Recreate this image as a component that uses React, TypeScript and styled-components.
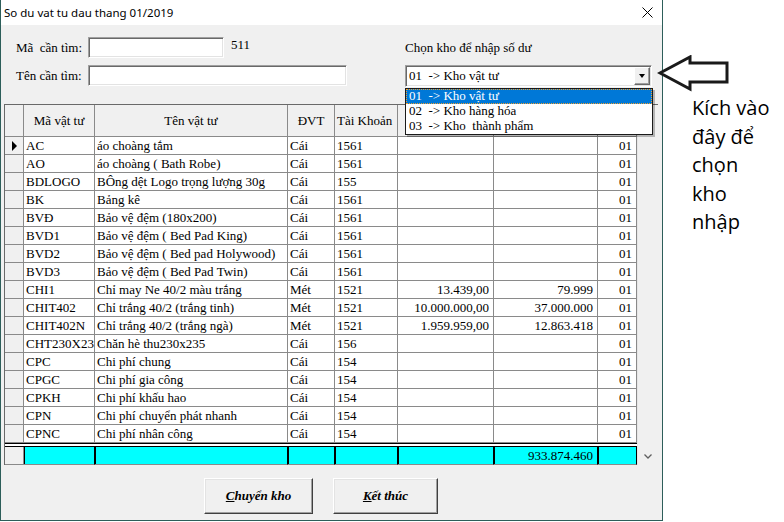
import React from 'react';
import styled, { createGlobalStyle } from 'styled-components';

const GlobalStyle = createGlobalStyle`
  html, body {
    margin: 0;
    padding: 0;
    background: #ffffff;
  }
  body {
    width: 784px;
    height: 522px;
    overflow: hidden;
  }
`;

const SERIF = `"Liberation Serif", "Times New Roman", serif`;
const COLS = '19px 71px 193px 47px 63px 96px 104px 39px';

const Screen = styled.div`
  display: flex;
  width: 784px;
  height: 522px;
  background: #ffffff;
`;

const Window = styled.div`
  flex-shrink: 0;
  width: 663px;
  height: 521px;
  box-sizing: border-box;
  border: 1px solid #2d5e5a;
  border-top: none;
  display: flex;
  flex-direction: column;
`;

const TitleBar = styled.div`
  height: 25px;
  flex-shrink: 0;
  display: flex;
  align-items: center;
  justify-content: space-between;
  padding: 0 9px 0 3px;
  background: #ffffff;
  font-family: "Noto Sans", "Liberation Sans", sans-serif;
  font-size: 11.5px;
  color: #000;
`;

const CloseGlyph = styled.svg`
  width: 11px;
  height: 11px;
`;

const Body = styled.div`
  flex: 1;
  background: #f0f0f0;
  display: flex;
  flex-direction: column;
  font-family: ${SERIF};
  font-size: 13px;
  color: #000;
`;

const FormArea = styled.div`
  height: 79px;
  box-sizing: border-box;
  padding-top: 12px;
  display: flex;
`;

const SearchForm = styled.div`
  width: 404px;
  box-sizing: border-box;
  padding-left: 15px;
  display: grid;
  grid-template-columns: 72px auto;
  grid-auto-rows: 21px;
  row-gap: 7px;
  align-items: center;
  align-content: start;
`;

const Label = styled.span`
  white-space: pre;
  line-height: 16px;
`;

const FieldGroup = styled.div`
  display: flex;
  align-items: flex-start;
  height: 21px;
`;

const TextBox = styled.div<{ $w: number }>`
  width: ${p => p.$w}px;
  height: 21px;
  box-sizing: border-box;
  background: #ffffff;
  border: 1px solid;
  border-color: #a0a0a0 #ffffff #ffffff #a0a0a0;
  box-shadow: inset 1px 1px 0 #696969, inset -1px -1px 0 #e3e3e3;
`;

const Value = styled.span`
  margin-left: 7px;
  line-height: 16px;
`;

const StoreSection = styled.div`
  width: 247px;
  display: flex;
  flex-direction: column;
`;

const StoreLabel = styled.span`
  margin-top: 3px;
  line-height: 16px;
`;

const Combo = styled.div`
  position: relative;
  margin-top: 9px;
  height: 22px;
  box-sizing: border-box;
  background: #ffffff;
  border: 1px solid;
  border-color: #a0a0a0 #ffffff #ffffff #a0a0a0;
  box-shadow: inset 1px 1px 0 #696969, inset -1px -1px 0 #e3e3e3;
  display: flex;
  align-items: center;
  justify-content: space-between;
  padding-left: 3px;
`;

const ComboText = styled.span`
  white-space: pre;
  line-height: 16px;
`;

const DropButton = styled.div`
  width: 16px;
  height: 18px;
  margin-right: 1px;
  box-sizing: border-box;
  background: #f0f0f0;
  border: 1px solid;
  border-color: #ffffff #696969 #696969 #ffffff;
  box-shadow: inset -1px -1px 0 #a0a0a0;
  display: flex;
  align-items: center;
  justify-content: center;
`;

const DownTriangle = styled.span`
  width: 0;
  height: 0;
  border-left: 3.5px solid transparent;
  border-right: 3.5px solid transparent;
  border-top: 4px solid #000;
`;

const OptionList = styled.div`
  position: absolute;
  top: 22px;
  left: -1px;
  width: 248px;
  box-sizing: border-box;
  background: #ffffff;
  border: 1px solid #1a1a1a;
  box-shadow: 2px 2px 0 rgba(0, 0, 0, 0.25);
  z-index: 5;
`;

const Option = styled.div<{ $selected?: boolean }>`
  height: 15px;
  box-sizing: border-box;
  padding-left: 3px;
  line-height: 14px;
  white-space: pre;
  background: ${p => (p.$selected ? '#0078d7' : 'transparent')};
  color: ${p => (p.$selected ? '#ffffff' : '#000')};
  outline: ${p => (p.$selected ? '1px dotted #f0a030' : 'none')};
  outline-offset: -1px;
`;

const GridFrame = styled.div`
  margin-left: 3px;
  width: 654px;
  height: 361px;
  box-sizing: border-box;
  border-top: 1px solid #696969;
  border-left: 1px solid #696969;
  display: flex;
  background: #ffffff;
`;

const GridBody = styled.div`
  width: 632px;
  display: flex;
  flex-direction: column;
`;

const Row = styled.div<{ $h: number }>`
  display: grid;
  grid-template-columns: ${COLS};
  height: ${p => p.$h}px;
`;

const TotalRow = styled(Row)`
  box-sizing: border-box;
  border-top: 4px double #000;
`;

type CellKind = 'head' | 'ind' | 'data' | 'total';

const Cell = styled.div<{ $kind?: CellKind; $align?: 'left' | 'right' | 'center' }>`
  box-sizing: border-box;
  border-right: 1px solid ${p => (p.$kind === 'total' ? '#000' : '#8a8a8a')};
  border-bottom: 1px solid #8a8a8a;
  background: ${p =>
    p.$kind === 'head' || p.$kind === 'ind'
      ? '#f0f0f0'
      : p.$kind === 'total'
        ? '#00ffff'
        : '#ffffff'};
  box-shadow: ${p => (p.$kind === 'total' ? 'inset 1px 0 0 #000' : 'none')};
  display: flex;
  align-items: center;
  justify-content: ${p =>
    p.$align === 'right' ? 'flex-end' : p.$align === 'center' ? 'center' : 'flex-start'};
  padding: ${p => (p.$align === 'right' ? '0 4px 0 0' : p.$align === 'center' ? '0' : '0 0 0 2px')};
  white-space: pre;
  overflow: hidden;
  line-height: 16px;
`;

const RowPointer = styled.span`
  width: 0;
  height: 0;
  margin-left: 1px;
  border-top: 5px solid transparent;
  border-bottom: 5px solid transparent;
  border-left: 5px solid #000;
`;

const ScrollTrack = styled.div`
  width: 21px;
  background: #f0f0f0;
  border-left: 1px solid #e6e6e6;
  box-sizing: border-box;
  display: flex;
  flex-direction: column;
  justify-content: flex-end;
  align-items: center;
  padding-bottom: 6px;
`;

const Chevron = styled.svg`
  width: 8px;
  height: 5px;
`;

const ButtonRow = styled.div`
  display: flex;
  gap: 20px;
  padding-left: 203px;
  margin-top: 13px;
`;

const Button = styled.button<{ $w: number }>`
  width: ${p => p.$w}px;
  height: 36px;
  box-sizing: border-box;
  background: #f0f0f0;
  border: 1px solid;
  border-color: #ffffff #404040 #404040 #ffffff;
  box-shadow: inset -1px -1px 0 #a0a0a0, inset 1px 1px 0 #e3e3e3;
  font-family: ${SERIF};
  font-size: 13px;
  font-weight: bold;
  font-style: italic;
  color: #000;
  padding: 0;
  cursor: pointer;
`;

const Mnemonic = styled.span`
  text-decoration: underline;
`;

const Annotation = styled.div`
  flex: 1;
  padding-top: 55px;
  display: flex;
  flex-direction: column;
`;

const ArrowSvg = styled.svg`
  width: 76px;
  height: 38px;
  margin-left: -6px;
`;

const Note = styled.div`
  margin: 1px 0 0 29px;
  font-family: "Open Sans", "Noto Sans", sans-serif;
  font-size: 20px;
  line-height: 28.5px;
  color: #000;
`;

type Item = {
  code: string;
  name: string;
  unit: string;
  account: string;
  qty?: string;
  amount?: string;
};

const items: Item[] = [
  { code: 'AC', name: 'áo choàng tắm', unit: 'Cái', account: '1561' },
  { code: 'AO', name: 'áo choàng ( Bath Robe)', unit: 'Cái', account: '1561' },
  { code: 'BDLOGO', name: 'BÔng dệt Logo trọng lượng 30g', unit: 'Cái', account: '155' },
  { code: 'BK', name: 'Bảng kê', unit: 'Cái', account: '1561' },
  { code: 'BVĐ', name: 'Bảo vệ đệm (180x200)', unit: 'Cái', account: '1561' },
  { code: 'BVD1', name: 'Bảo vệ đệm ( Bed Pad King)', unit: 'Cái', account: '1561' },
  { code: 'BVD2', name: 'Bảo vệ đệm ( Bed pad Holywood)', unit: 'Cái', account: '1561' },
  { code: 'BVD3', name: 'Bảo vệ đệm ( Bed Pad Twin)', unit: 'Cái', account: '1561' },
  { code: 'CHI1', name: 'Chỉ may Ne 40/2 màu trắng', unit: 'Mét', account: '1521', qty: '13.439,00', amount: '79.999' },
  { code: 'CHIT402', name: 'Chỉ trắng 40/2 (trắng tinh)', unit: 'Mét', account: '1521', qty: '10.000.000,00', amount: '37.000.000' },
  { code: 'CHIT402N', name: 'Chỉ trắng 40/2 (trắng ngà)', unit: 'Mét', account: '1521', qty: '1.959.959,00', amount: '12.863.418' },
  { code: 'CHT230X235', name: 'Chăn hè thu230x235', unit: 'Cái', account: '156' },
  { code: 'CPC', name: 'Chi phí chung', unit: 'Cái', account: '154' },
  { code: 'CPGC', name: 'Chi phí gia công', unit: 'Cái', account: '154' },
  { code: 'CPKH', name: 'Chi phí khấu hao', unit: 'Cái', account: '154' },
  { code: 'CPN', name: 'Chi phí chuyển phát nhanh', unit: 'Cái', account: '154' },
  { code: 'CPNC', name: 'Chi phí nhân công', unit: 'Cái', account: '154' },
];

const stores = ['01  -> Kho vật tư', '02  -> Kho hàng hóa', '03  -> Kho  thành phẩm'];

const App: React.FC = () => {
  return (
    <Screen>
      <GlobalStyle />
      <Window>
        <TitleBar>
          <span>So du vat tu dau thang 01/2019</span>
          <CloseGlyph viewBox="0 0 11 11">
            <path d="M0.5 0.5 L10.5 10.5 M10.5 0.5 L0.5 10.5" stroke="#000" strokeWidth="1" />
          </CloseGlyph>
        </TitleBar>

        <Body>
          <FormArea>
            <SearchForm>
              <Label>{'Mã  cần tìm:'}</Label>
              <FieldGroup>
                <TextBox $w={136} />
                <Value>511</Value>
              </FieldGroup>
              <Label>Tên cần tìm:</Label>
              <FieldGroup>
                <TextBox $w={259} />
              </FieldGroup>
            </SearchForm>

            <StoreSection>
              <StoreLabel>Chọn kho để nhập số dư</StoreLabel>
              <Combo>
                <ComboText>{stores[0]}</ComboText>
                <DropButton>
                  <DownTriangle />
                </DropButton>
                <OptionList>
                  {stores.map((s, i) => (
                    <Option key={s} $selected={i === 0}>
                      {s}
                    </Option>
                  ))}
                </OptionList>
              </Combo>
            </StoreSection>
          </FormArea>

          <GridFrame>
            <GridBody>
              <Row $h={32}>
                <Cell $kind="head" />
                <Cell $kind="head" $align="center">Mã vật tư</Cell>
                <Cell $kind="head" $align="center">Tên vật tư</Cell>
                <Cell $kind="head" $align="center">ĐVT</Cell>
                <Cell $kind="head">Tài Khoản</Cell>
                <Cell $kind="head" />
                <Cell $kind="head" />
                <Cell $kind="head" />
              </Row>

              {items.map((it, i) => (
                <Row $h={18} key={it.code}>
                  <Cell $kind="ind" $align="center">{i === 0 && <RowPointer />}</Cell>
                  <Cell>{it.code}</Cell>
                  <Cell>{it.name}</Cell>
                  <Cell>{it.unit}</Cell>
                  <Cell>{it.account}</Cell>
                  <Cell $align="right">{it.qty}</Cell>
                  <Cell $align="right">{it.amount}</Cell>
                  <Cell $align="right">01</Cell>
                </Row>
              ))}

              <TotalRow $h={22}>
                <Cell $kind="ind" />
                <Cell $kind="total" />
                <Cell $kind="total" />
                <Cell $kind="total" />
                <Cell $kind="total" />
                <Cell $kind="total" />
                <Cell $kind="total" $align="right">933.874.460</Cell>
                <Cell $kind="total" />
              </TotalRow>
            </GridBody>
            <ScrollTrack>
              <Chevron viewBox="0 0 8 5">
                <polyline points="0.5,0.5 4,4 7.5,0.5" fill="none" stroke="#606060" strokeWidth="1.3" />
              </Chevron>
            </ScrollTrack>
          </GridFrame>

          <ButtonRow>
            <Button $w={109}>
              <Mnemonic>C</Mnemonic>huyển kho
            </Button>
            <Button $w={105}>
              <Mnemonic>K</Mnemonic>ết thúc
            </Button>
          </ButtonRow>
        </Body>
      </Window>

      <Annotation>
        <ArrowSvg viewBox="0 0 76 38">
          <polygon
            points="3,18 33,2 33,8 70,8 70,27 33,27 33,34"
            fill="#ffffff"
            stroke="#1a1a1a"
            strokeWidth="3"
            strokeLinejoin="miter"
          />
        </ArrowSvg>
        <Note>
          Kích vào
          <br />
          đây để
          <br />
          chọn
          <br />
          kho
          <br />
          nhập
        </Note>
      </Annotation>
    </Screen>
  );
};

export default App;
